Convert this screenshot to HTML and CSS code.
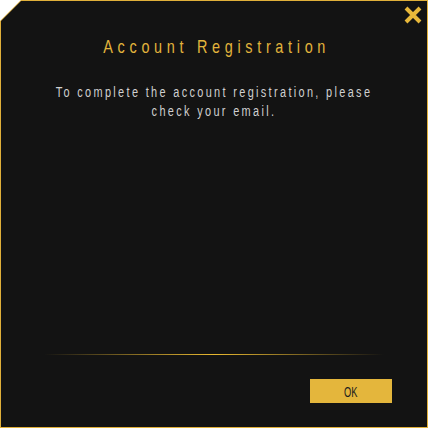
FILE: index.html
```html
<!DOCTYPE html>
<html lang="en">
  <head>
    <meta charset="UTF-8" />
    <title>Account Registration</title>
    <link rel="stylesheet" href="styles.css">
  </head>
  <body>
    <div class="dialog-frame">
      <div class="dialog">
        <button class="close-button" aria-label="Close">
          <svg width="18" height="18" viewBox="0 0 18 18">
            <path d="M2 2L16 16M16 2L2 16" stroke="#e8b83a" stroke-width="4" stroke-linecap="butt" />
          </svg>
        </button>
        <h2 class="dialog-title">Account Registration</h2>
        <p class="dialog-text">To complete the account registration, please check your email.</p>
        <div class="dialog-spacer"></div>
        <div class="dialog-divider"></div>
        <div class="dialog-actions">
          <button class="ok-button"><span>OK</span></button>
        </div>
      </div>
    </div>
  </body>
</html>
```
FILE: styles.css
```css
* {
  box-sizing: border-box;
  margin: 0;
  padding: 0;
}

body {
  background-color: #fff;
  font-family: "Liberation Sans", Arial, sans-serif;
}

.dialog-frame {
  width: 428px;
  height: 428px;
  padding: 1px;
  background-color: #e0b03a;
  clip-path: polygon(21px 0, 100% 0, 100% 100%, 0 100%, 0 21px);
}

.dialog {
  position: relative;
  height: 100%;
  background-color: #131313;
  clip-path: polygon(20px 0, 100% 0, 100% 100%, 0 100%, 0 20px);
  display: flex;
  flex-direction: column;
  align-items: center;
  padding-top: 35px;
}

.close-button {
  position: absolute;
  top: 5px;
  right: 5px;
  width: 18px;
  height: 18px;
  background: none;
  border: none;
  cursor: pointer;
}

.close-button svg {
  display: block;
}

/* the original face is a narrow one, so squeeze Liberation Sans */
.dialog-title {
  color: #e2b43c;
  font-size: 18.5px;
  font-weight: normal;
  letter-spacing: 6px;
  padding-left: 6px;
  line-height: 22px;
  transform: scaleX(0.78);
}

.dialog-text {
  margin-top: 25px;
  width: 420px;
  color: #d0d0d0;
  font-size: 14px;
  letter-spacing: 3px;
  line-height: 19px;
  text-align: center;
  transform: scaleX(0.78);
}

.dialog-spacer {
  flex-grow: 1;
}

.dialog-divider {
  width: 340px;
  height: 1px;
  background: linear-gradient(to right, rgba(226, 176, 48, 0), #e8b830 50%, rgba(226, 176, 48, 0));
}

.dialog-actions {
  align-self: stretch;
  display: flex;
  justify-content: flex-end;
  padding: 24px 35px 24px 0;
}

.ok-button {
  width: 82px;
  height: 24px;
  border: none;
  background-color: #e4b63c;
  color: #1e1e1e;
  font-family: "Liberation Sans", Arial, sans-serif;
  font-size: 15px;
  cursor: pointer;
}

.ok-button span {
  display: inline-block;
  transform: scaleX(0.62);
}
```
